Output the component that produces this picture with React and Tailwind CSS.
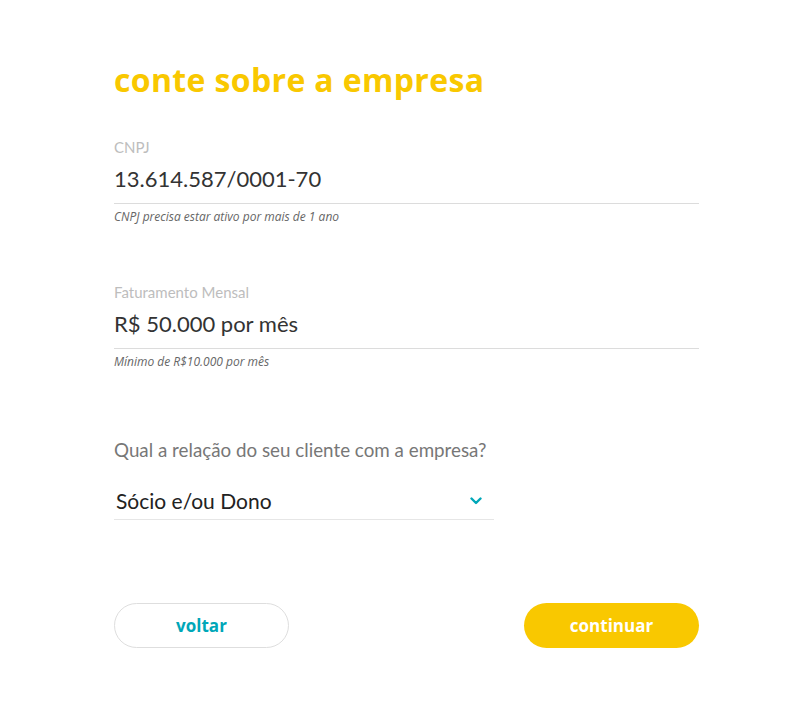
import React from "react";

export default function App() {
  const font = { fontFamily: "Lato, 'Open Sans', sans-serif" };
  return (
    <div className="min-h-[725px] w-[798px] bg-white" style={font}>
      <div className="ml-[114px] w-[585px] pt-[58px]">
        <h1 className="font-['Open_Sans',sans-serif] text-[32px] font-bold leading-[44px] tracking-[0.35px] text-[#f9c800]">
          conte sobre a empresa
        </h1>

        <div className="mt-[35px]">
          <div className="text-[15px] leading-[20px] text-[#bdbdbd]">CNPJ</div>
          <div className="mt-[9px] border-b border-[#dcdcdc] pb-[11px] text-[22px] leading-[26px] text-[#333]">
            13.614.587/0001-70
          </div>
          <div className="mt-[6px] font-['Open_Sans',sans-serif] text-[12px] italic leading-[14px] text-[#666]">
            CNPJ precisa estar ativo por mais de 1 ano
          </div>
        </div>

        <div className="mt-[58px]">
          <div className="text-[15px] leading-[20px] text-[#bdbdbd]">Faturamento Mensal</div>
          <div className="mt-[9px] border-b border-[#dcdcdc] pb-[11px] text-[22px] leading-[26px] text-[#333]">
            R$ 50.000 por mês
          </div>
          <div className="mt-[6px] font-['Open_Sans',sans-serif] text-[12px] italic leading-[14px] text-[#666]">
            Mínimo de R$10.000 por mês
          </div>
        </div>

        <div className="mt-[69px] text-[18.8px] leading-[24px] text-[#777]">
          Qual a relação do seu cliente com a empresa?
        </div>
        <div className="mt-[26px] flex w-[380px] items-center justify-between border-b border-[#e6e6e6] pb-[5px] pl-[2px] pr-[12px]">
          <span className="text-[21px] leading-[26px] text-[#222]">Sócio e/ou Dono</span>
          <svg width="12" height="8" viewBox="0 0 12 8" fill="none">
            <path d="M1.5 1.5 L6 6 L10.5 1.5" stroke="#00a7b8" strokeWidth="2.4" strokeLinecap="round" strokeLinejoin="round" />
          </svg>
        </div>

        <div className="mt-[83px] flex items-center justify-between">
          <button className="h-[45px] w-[175px] rounded-full border border-[#dedede] bg-white font-['Open_Sans',sans-serif] text-[17px] font-bold text-[#00a7b8]">
            voltar
          </button>
          <button className="h-[45px] w-[175px] rounded-full bg-[#f9c800] font-['Open_Sans',sans-serif] text-[17px] font-bold text-white">
            continuar
          </button>
        </div>
      </div>
    </div>
  );
}
